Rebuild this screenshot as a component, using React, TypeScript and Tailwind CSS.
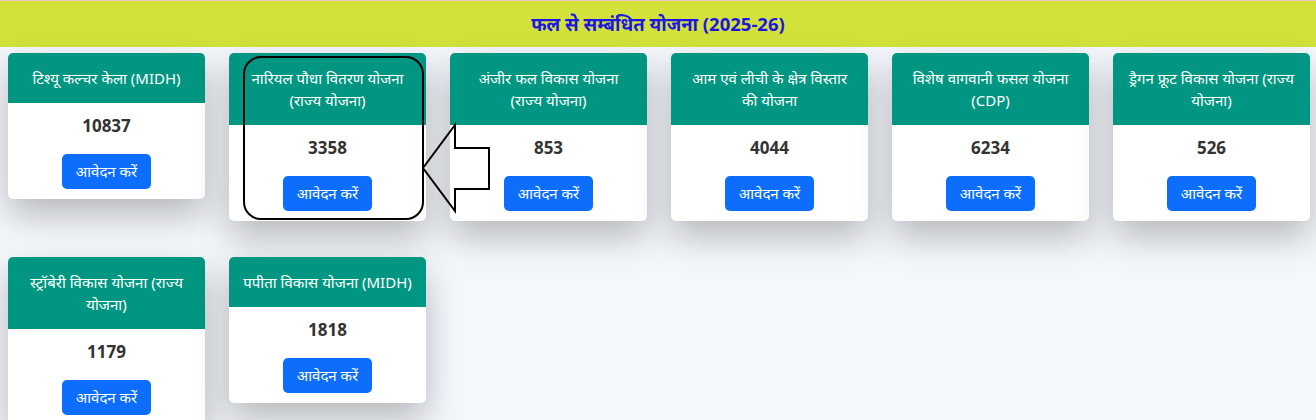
import React from 'react';

interface Scheme {
  title: string;
  count: number;
}

const schemes: Scheme[] = [
  { title: 'टिश्यू कल्चर केला (MIDH)', count: 10837 },
  { title: 'नारियल पौधा वितरण योजना (राज्य योजना)', count: 3358 },
  { title: 'अंजीर फल विकास योजना (राज्य योजना)', count: 853 },
  { title: 'आम एवं लीची के क्षेत्र विस्तार की योजना', count: 4044 },
  { title: 'विशेष वागवानी फसल योजना (CDP)', count: 6234 },
  { title: 'ड्रैगन फ्रूट विकास योजना (राज्य योजना)', count: 526 },
  { title: 'स्ट्रॉबेरी विकास योजना (राज्य योजना)', count: 1179 },
  { title: 'पपीता विकास योजना (MIDH)', count: 1818 },
];

const SchemeCard: React.FC<{ scheme: Scheme }> = ({ scheme }) => (
  <div className="w-[197px] bg-white rounded-[5px] overflow-hidden shadow-[0_16px_36px_rgba(0,0,0,0.26)]">
    <div className="bg-[#009681] text-white text-center text-[15px] leading-[22px] px-3 py-[14px]">
      {scheme.title}
    </div>
    <div className="flex flex-col items-center pt-[10px] pb-[10px]">
      <div className="text-[17px] leading-[26px] font-bold text-[#333]">{scheme.count}</div>
      <button className="mt-[15px] h-[35px] w-[89px] rounded-[5px] bg-[#0d6efd] text-white text-[15px]">
        आवेदन करें
      </button>
    </div>
  </div>
);

export default function App() {
  return (
    <div
      className="relative min-h-[420px] bg-[#f4f7fc]"
      style={{ fontFamily: '"Noto Sans", "Open Sans", sans-serif' }}
    >
      {/* title strip */}
      <div className="h-[47px] bg-[#d2e23a] border-t border-[#ecc6c6] flex items-center justify-center">
        <h2 className="text-[18.5px] font-bold text-[#1c16e0]">फल से सम्बंधित योजना (2025-26)</h2>
      </div>

      {/* cards */}
      <div className="flex flex-wrap items-start gap-x-6 gap-y-9 pl-2 pr-1 pt-[6px] pb-6">
        {schemes.map((s, i) => (
          <SchemeCard key={i} scheme={s} />
        ))}
      </div>

      {/* highlight annotation */}
      <div className="absolute left-[243px] top-[56px] w-[181px] h-[164px] border-2 border-black rounded-[18px] pointer-events-none" />
      <svg
        className="absolute left-[420px] top-[122px] pointer-events-none"
        width="72"
        height="92"
        viewBox="420 122 72 92"
      >
        <polygon
          points="423,168 455,125 455,148 489,148 489,189 455,189 455,211"
          fill="none"
          stroke="#000"
          strokeWidth="2"
        />
      </svg>
    </div>
  );
}
